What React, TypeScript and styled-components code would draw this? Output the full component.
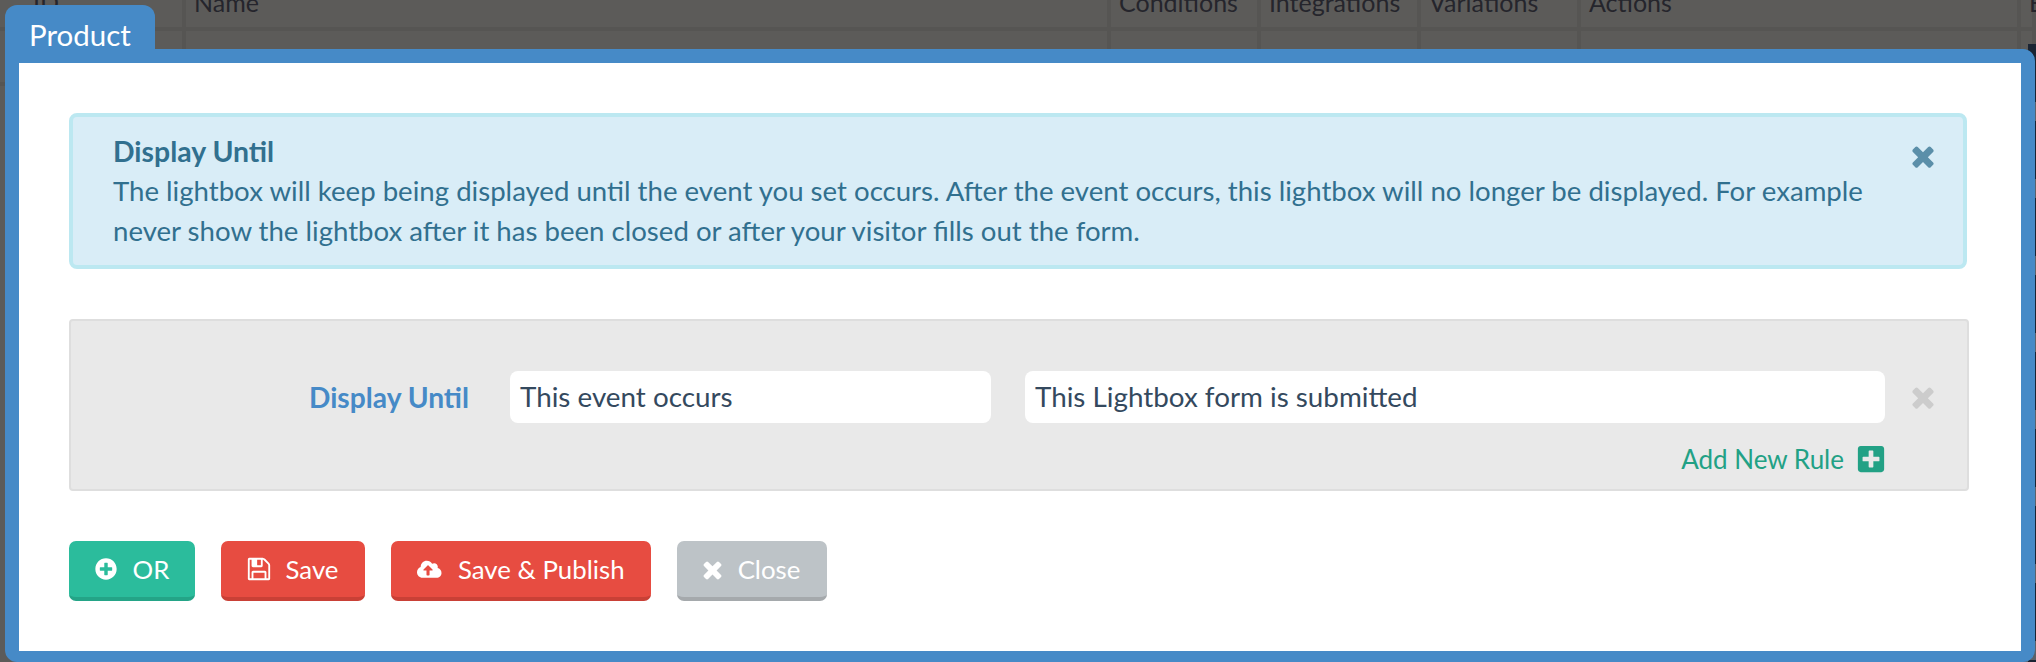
import { createGlobalStyle, styled } from "styled-components";
import { FaCloudUploadAlt, FaPlusCircle, FaPlusSquare } from "react-icons/fa";

const GlobalStyle = createGlobalStyle`
  html, body {
    margin: 0;
    padding: 0;
    width: 2036px;
    height: 662px;
    overflow: hidden;
    background: #5c5b59;
    font-family: Lato, "Liberation Sans", sans-serif;
  }
`;

const Page = styled.div`
  position: relative;
  width: 2036px;
  height: 662px;
  overflow: hidden;
  background: #5c5b59;
`;

const BackTable = styled.div`
  position: absolute;
  top: -24px;
  left: 0;
  right: 0;
  display: grid;
  grid-template-columns: 186px 925px 150px 160px 160px 440px 15px;
  grid-auto-rows: 55px;
`;

const BackCell = styled.div`
  box-sizing: border-box;
  padding: 11px 0 0 8px;
  border-right: 4px solid #565553;
  border-bottom: 4px solid #565553;
  font-size: 25px;
  line-height: 30px;
  white-space: nowrap;
  color: #25252c;

  &:first-child {
    padding-left: 33px;
  }
`;

const EdgeStrip = styled.div`
  position: absolute;
  top: 44px;
  right: 0;
  bottom: 0;
  width: 8px;
  background: repeating-linear-gradient(180deg, #1a2433 0 58px, #5c6068 58px 77px);
`;

const Modal = styled.div`
  position: absolute;
  top: 5px;
  left: 5px;
  right: 1px;
  bottom: 0;
  display: flex;
  flex-direction: column;
`;

const Tab = styled.div`
  width: 150px;
  height: 44px;
  box-sizing: border-box;
  padding: 14px 0 0 24px;
  background: #468ac7;
  border-radius: 12px 12px 0 0;
  font-size: 29.5px;
  line-height: 32px;
  color: #fff;
`;

const Frame = styled.div`
  flex: 1;
  display: flex;
  border: solid #468ac7;
  border-width: 14px 14px 11px 14px;
  border-radius: 0 12px 12px 12px;
`;

const Body = styled.div`
  flex: 1;
  min-width: 0;
  background: #fff;
  padding: 50px 54px 0 50px;
`;

const Alert = styled.div`
  position: relative;
  box-sizing: border-box;
  height: 156px;
  padding: 14px 100px 0 40px;
  background: #d9edf7;
  border: 4px solid #bce8f1;
  border-radius: 8px;
  color: #31708f;
  font-size: 27.6px;
  line-height: 40px;
`;

const AlertTitle = styled.div`
  font-size: 28.4px;
  font-weight: 700;
`;

const AlertClose = styled.span`
  position: absolute;
  top: 23px;
  right: 24px;
  display: flex;
  color: #31708f;
  opacity: 0.75;
`;

const RulePanel = styled.div`
  box-sizing: border-box;
  height: 172px;
  margin: 50px -2px 0 0;
  padding-top: 50px;
  background: #e9e9e9;
  border: 2px solid #dedede;
  border-radius: 4px;
`;

const RuleRow = styled.div`
  display: flex;
  align-items: center;
  height: 52px;
`;

const RuleLabel = styled.label`
  width: 398px;
  text-align: right;
  font-size: 28.2px;
  font-weight: 700;
  color: #468ac7;
`;

const RuleInput = styled.div<{ $wide?: boolean }>`
  box-sizing: border-box;
  width: ${(p) => (p.$wide ? "860px" : "481px")};
  height: 52px;
  margin-left: ${(p) => (p.$wide ? "34px" : "41px")};
  padding-left: 10px;
  background: #fff;
  border-radius: 8px;
  font-size: 27.8px;
  line-height: 51px;
  color: #34495e;
`;

const RuleRemove = styled.span`
  display: flex;
  margin-left: 22px;
  color: #cccccc;
`;

const AddRule = styled.div`
  display: flex;
  align-items: center;
  justify-content: flex-end;
  gap: 12px;
  height: 26px;
  margin: 23px 81px 0 0;
  font-size: 26px;
  color: #22a185;
`;

const AddIcon = styled.span`
  display: flex;
  font-size: 30px;
`;

const ButtonRow = styled.div`
  display: flex;
  gap: 26px;
  margin-top: 50px;
`;

const variants = {
  green: { bg: "#2bbc9c", edge: "#24a487" },
  red: { bg: "#e74c41", edge: "#c94036" },
  gray: { bg: "#bdc3c7", edge: "#a5a9ac" },
};

const Button = styled.button<{ $variant: keyof typeof variants; $width: number }>`
  display: flex;
  align-items: center;
  justify-content: center;
  gap: 16px;
  box-sizing: border-box;
  width: ${(p) => p.$width}px;
  height: 60px;
  padding: 0;
  border: 0;
  border-bottom: 4px solid ${(p) => variants[p.$variant].edge};
  border-radius: 7px;
  background: ${(p) => variants[p.$variant].bg};
  color: #fff;
  font-family: Lato, sans-serif;
  font-size: 25.8px;
`;

const ButtonIcon = styled.span<{ $size?: number; $trim?: number }>`
  display: flex;
  font-size: ${(p) => p.$size ?? 22}px;
  margin: 0 ${(p) => -(p.$trim ?? 0)}px;
`;

// font awesome 4 glyphs, the v5 ones in react-icons are too thin
const timesPath =
  "M1490 1322q0 40-28 68l-136 136q-28 28-68 28t-68-28l-294-294-294 294q-28 28-68 28t-68-28l-136-136q-28-28-28-68t28-68l294-294-294-294q-28-28-28-68t28-68l136-136q28-28 68-28t68 28l294 294 294-294q28-28 68-28t68 28l136 136q28 28 28 68t-28 68l-294 294 294 294q28 28 28 68z";
const floppyPath =
  "M512 1536h768v-384h-768v384zm896 0h128v-896q0-14-10-38.500t-20-34.500l-281-281q-10-10-34-20t-39-10v416q0 40-28 68t-68 28h-576q-40 0-68-28t-28-68v-416h-128v1280h128v-416q0-40 28-68t68-28h832q40 0 68 28t28 68v416zm-384-928v-320q0-13-9.500-22.500t-22.500-9.500h-192q-13 0-22.500 9.500t-9.500 22.500v320q0 13 9.500 22.500t22.500 9.500h192q13 0 22.500-9.500t9.500-22.500zm640 32v928q0 40-28 68t-68 28h-1344q-40 0-68-28t-28-68v-1344q0-40 28-68t68-28h928q40 0 88 20t76 48l280 280q28 28 48 76t20 88z";

function Glyph({ d, size }: { d: string; size: number }) {
  return (
    <svg width={size} height={size} viewBox="0 0 1792 1792" fill="currentColor">
      <path d={d} />
    </svg>
  );
}

export default function App() {
  const headers = ["ID", "Name", "Conditions", "Integrations", "Variations", "Actions", "E"];
  const emptyRow = ["a", "b", "c", "d", "e", "f", "g"];

  return (
    <Page>
      <GlobalStyle />
      <BackTable>
        {headers.map((h) => (
          <BackCell key={h}>{h}</BackCell>
        ))}
        {emptyRow.map((k) => (
          <BackCell key={k} />
        ))}
      </BackTable>
      <EdgeStrip />
      <Modal>
        <Tab>Product</Tab>
        <Frame>
          <Body>
            <Alert>
              <AlertTitle>Display Until</AlertTitle>
              The lightbox will keep being displayed until the event you set occurs. After the event occurs, this lightbox
              will no longer be displayed. For example never show the lightbox after it has been closed or after your
              visitor fills out the form.
              <AlertClose>
                <Glyph d={timesPath} size={32} />
              </AlertClose>
            </Alert>
            <RulePanel>
              <RuleRow>
                <RuleLabel>Display Until</RuleLabel>
                <RuleInput>This event occurs</RuleInput>
                <RuleInput $wide>This Lightbox form is submitted</RuleInput>
                <RuleRemove>
                  <Glyph d={timesPath} size={32} />
                </RuleRemove>
              </RuleRow>
              <AddRule>
                Add New Rule
                <AddIcon>
                  <FaPlusSquare />
                </AddIcon>
              </AddRule>
            </RulePanel>
            <ButtonRow>
              <Button $variant="green" $width={126}>
                <ButtonIcon>
                  <FaPlusCircle />
                </ButtonIcon>
                OR
              </Button>
              <Button $variant="red" $width={144}>
                <ButtonIcon $trim={2}>
                  <Glyph d={floppyPath} size={26} />
                </ButtonIcon>
                Save
              </Button>
              <Button $variant="red" $width={260}>
                <ButtonIcon $size={24.5}>
                  <FaCloudUploadAlt />
                </ButtonIcon>
                Save &amp; Publish
              </Button>
              <Button $variant="gray" $width={150}>
                <ButtonIcon $trim={4.5}>
                  <Glyph d={timesPath} size={27} />
                </ButtonIcon>
                Close
              </Button>
            </ButtonRow>
          </Body>
        </Frame>
      </Modal>
    </Page>
  );
}
